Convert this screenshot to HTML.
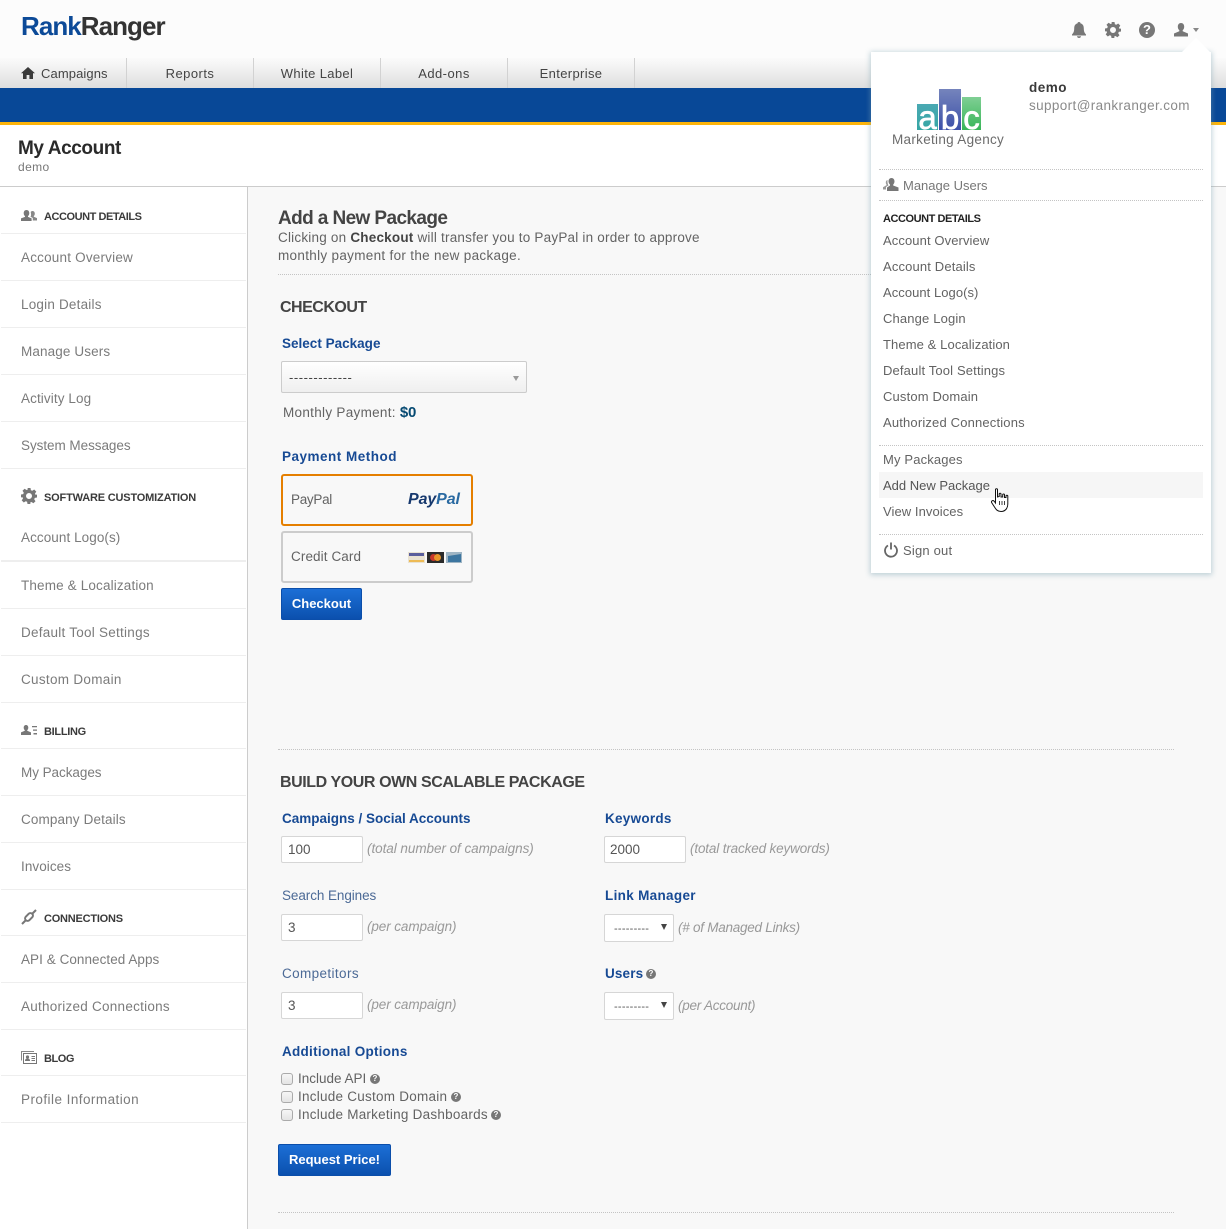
<!DOCTYPE html>
<html lang="en"><head><meta charset="utf-8"><title>Rank Ranger - Add a New Package</title>
<style>
html,body{margin:0;padding:0}
body{width:1226px;height:1229px;overflow:hidden;position:relative;background:#f8f8f8;font-family:"Liberation Sans",Arial,sans-serif;font-size:13.5px;color:#666;letter-spacing:.2px}
.a{position:absolute}
.t{position:absolute;white-space:nowrap;line-height:16px;margin-top:1px}
.l{color:#7b7b7b}
.m{color:#636363}
.p{color:#636363;font-size:13px;letter-spacing:.15px}
.h{font-weight:bold;font-size:11px;color:#3a3a3a;left:44px}
.b{font-weight:bold;color:#174a94;font-size:13.5px;letter-spacing:.15px}
.line{position:absolute;left:1px;width:245px;height:1px;background:#eee}
.dot{position:absolute;height:0;border-top:1px dotted #c4c4c4}
.in{position:absolute;box-sizing:border-box;width:82px;height:27px;background:#fff;border:1px solid #d6d6d6;border-radius:2px}
.sel{position:absolute;box-sizing:border-box;width:70px;height:28px;background:#fff;border:1px solid #d6d6d6;border-radius:2px}
.sel:after{content:"";position:absolute;left:56px;top:9px;border:3.5px solid transparent;border-top:6px solid #444;border-bottom:0}
.i{font-style:italic;color:#999;font-size:13.5px}
.cb{position:absolute;box-sizing:border-box;left:281px;width:12px;height:12px;border:1px solid #aaa;border-radius:3px;background:linear-gradient(#f6f6f6,#e4e4e4)}
.q{position:absolute;width:10px;height:10px;border-radius:50%;background:#777;color:#fff;font:bold 8px/10px "Liberation Sans",sans-serif;text-align:center;letter-spacing:0}
.btn{position:absolute;box-sizing:border-box;height:32px;border:1px solid #0b4eaa;border-radius:2px;background:linear-gradient(#1c6fd6,#0b50ae);color:#fff;font-weight:bold;font-size:13px;line-height:29px;text-align:center;letter-spacing:0}
.sep{position:absolute;top:58px;width:1px;height:30px;background:#d2d2d2}
.nv{position:absolute;top:65px;line-height:16px;color:#444;font-size:13px;letter-spacing:.45px;text-align:center;width:126px}
svg{position:absolute;display:block;overflow:visible}
</style></head><body>

<!-- header -->
<div class="a" style="left:0;top:0;width:1226px;height:58px;background:#fcfcfc"></div>
<div class="t" style="left:21px;top:10px;line-height:30px;font-size:26px;font-weight:bold;letter-spacing:-.95px;color:#333"><span style="color:#0c4a98">Rank</span>Ranger</div>

<!-- nav -->
<div class="a" style="left:0;top:58px;width:1226px;height:30px;background:linear-gradient(#fbfbfb,#dedede)"></div>
<div class="sep" style="left:126px"></div><div class="sep" style="left:253px"></div><div class="sep" style="left:380px"></div><div class="sep" style="left:507px"></div><div class="sep" style="left:634px"></div>
<svg style="left:21px;top:67px" width="14" height="12" viewBox="0 0 14 12"><path d="M7 0 L14 6.2 L12 6.2 L12 12 L8.4 12 L8.4 8 L5.6 8 L5.600 12 L2 12 L2 6.2 L0 6.2Z" fill="#3a3a3a"/></svg>
<div class="t nv" style="left:41px;width:auto;letter-spacing:.1px">Campaigns</div>
<div class="t nv" style="left:127px">Reports</div>
<div class="t nv" style="left:254px;letter-spacing:.35px">White Label</div>
<div class="t nv" style="left:381px">Add-ons</div>
<div class="t nv" style="left:508px;letter-spacing:.35px">Enterprise</div>

<div class="a" style="left:0;top:88px;width:1226px;height:34px;background:#084897"></div>
<div class="a" style="left:0;top:122px;width:1226px;height:3px;background:#fdb40a"></div>
<div class="a" style="left:0;top:125px;width:1226px;height:61px;background:#fff"></div>
<div class="a" style="left:0;top:186px;width:1226px;height:1px;background:#ccc"></div>
<div class="t" style="left:18px;top:138px;line-height:20px;font-size:19px;font-weight:bold;letter-spacing:-.4px;color:#2a2a2a">My Account</div>
<div class="t" style="left:18px;top:158px;font-size:12px;color:#777;letter-spacing:.4px">demo</div>

<!-- sidebar -->
<div class="a" style="left:0;top:187px;width:247px;height:1042px;background:#fff"></div>
<div class="a" style="left:247px;top:187px;width:1px;height:1042px;background:#ccc"></div>

<svg style="left:21px;top:210px" width="16" height="11" viewBox="0 0 16 11"><path d="M5.5 0C7.3 0 8.3 1.4 8.3 3.2 8.3 4.6 7.6 5.6 7 6.1L7 6.9 10.6 8.4 10.6 11 0 11 0 8.4 4 6.9 4 6.1C3.300 5.600 2.700 4.600 2.700 3.200 2.700 1.400 3.700 0 5.500 0Z" fill="#777"/><path d="M11.500 1C13 1 13.800 2.200 13.800 3.700 13.800 4.800 13.300 5.600 12.800 6L12.800 6.800 16 8.100 16 10.500 11.800 10.500 11.800 8 9.500 6.800C10.300 5.800 10.200 4 9.700 2 10.100 1.400 10.700 1 11.500 1Z" fill="#888"/></svg>
<div class="t h" style="top:208px;letter-spacing:-.45px">ACCOUNT DETAILS</div>
<div class="line" style="top:233px"></div>
<div class="t l" style="left:21px;top:249px">Account Overview</div><div class="line" style="top:280px"></div>
<div class="t l" style="left:21px;top:296px">Login Details</div><div class="line" style="top:327px"></div>
<div class="t l" style="left:21px;top:343px;letter-spacing:.12px">Manage Users</div><div class="line" style="top:374px"></div>
<div class="t l" style="left:21px;top:390px;letter-spacing:.1px">Activity Log</div><div class="line" style="top:421px"></div>
<div class="t l" style="left:21px;top:437px;letter-spacing:-.05px">System Messages</div><div class="line" style="top:468px"></div>

<svg style="left:21px;top:488px" width="16" height="16" viewBox="0 0 16 16"><path fill="#777" fill-rule="evenodd" d="M6.500 0h3l.4 2.200 1.400.6L13.200 1.500l2.100 2.100-1.300 1.900.6 1.400L16 6.500v3l-2.200.4-.6 1.400 1.300 1.900-2.100 2.100-1.900-1.300-1.400.6L9.500 16h-3l-.4-2.200-1.400-.6-1.900 1.300L.7 12.400 2 10.500 1.400 9.100 0 9.500v-3l2.200-.4.6-1.400L1.500 2.800 3.600.7 5.500 2l1.400-.6ZM8 5a3 3 0 1 0 0 6 3 3 0 0 0 0-6Z"/></svg>
<div class="t h" style="top:489px;letter-spacing:-.18px">SOFTWARE CUSTOMIZATION</div>
<div class="t l" style="left:21px;top:529px;letter-spacing:.07px">Account Logo(s)</div><div class="a" style="left:1px;top:560px;width:245px;height:2px;background:#eee"></div>
<div class="t l" style="left:21px;top:577px;letter-spacing:.15px">Theme &amp; Localization</div><div class="line" style="top:608px"></div>
<div class="t l" style="left:21px;top:624px;letter-spacing:.25px">Default Tool Settings</div><div class="line" style="top:655px"></div>
<div class="t l" style="left:21px;top:671px;letter-spacing:.3px">Custom Domain</div><div class="line" style="top:702px"></div>

<svg style="left:21px;top:725px" width="16" height="10" viewBox="0 0 16 10"><path d="M5 0C6.500 0 7.300 1.200 7.300 2.600 7.300 3.800 6.800 4.700 6.200 5.100L6.200 5.800 10 7.400 10 10 0 10 0 7.400 3.800 5.800 3.800 5.100C3.200 4.700 2.700 3.800 2.700 2.600 2.700 1.200 3.500 0 5 0Z" fill="#777"/><path d="M11 1h5v1.300h-5ZM12 4.500h4v1.300h-4ZM12.500 8h3.500v1.500h-3.500Z" fill="#777"/></svg>
<div class="t h" style="top:723px;letter-spacing:-.3px">BILLING</div>
<div class="line" style="top:748px"></div>
<div class="t l" style="left:21px;top:764px;letter-spacing:-.05px">My Packages</div><div class="line" style="top:795px"></div>
<div class="t l" style="left:21px;top:811px;letter-spacing:.13px">Company Details</div><div class="line" style="top:842px"></div>
<div class="t l" style="left:21px;top:858px;letter-spacing:.07px">Invoices</div><div class="line" style="top:889px"></div>

<svg style="left:21px;top:909px" width="16" height="16" viewBox="0 0 16 16"><g fill="none" stroke="#777" stroke-width="2"><path d="M1 15 4.500 11.500"/><path d="M15 1 11.500 4.500"/><rect x="3.500" y="5.500" width="9" height="5" rx="2.500" transform="rotate(-45 8 8)"/></g></svg>
<div class="t h" style="top:910px;letter-spacing:-.22px">CONNECTIONS</div>
<div class="line" style="top:935px"></div>
<div class="t l" style="left:21px;top:951px;letter-spacing:.05px">API &amp; Connected Apps</div><div class="line" style="top:982px"></div>
<div class="t l" style="left:21px;top:998px;letter-spacing:.25px">Authorized Connections</div><div class="line" style="top:1029px"></div>

<svg style="left:21px;top:1051px" width="16" height="13" viewBox="0 0 16 13"><path d="M.5 9.500V.5H13" fill="none" stroke="#888"/><rect x="2.500" y="2.500" width="13" height="10" fill="#fff" stroke="#777"/><circle cx="6.500" cy="6" r="1.600" fill="#777"/><path d="M4 10c0-2 1-2.500 2.500-2.500S9 8 9 10Z" fill="#777"/><path d="M10.500 5.500h3.500M10.500 7.500h3.500M10.500 9.500h3.500" stroke="#777"/></svg>
<div class="t h" style="top:1050px;letter-spacing:-.45px">BLOG</div>
<div class="line" style="top:1075px"></div>
<div class="t l" style="left:21px;top:1091px;letter-spacing:.45px">Profile Information</div><div class="line" style="top:1122px"></div>

<!-- main -->
<div class="t" style="left:278px;top:208px;line-height:20px;font-size:19px;font-weight:bold;letter-spacing:-.6px;color:#444">Add a New Package</div>
<div class="t m" style="left:278px;top:229px;letter-spacing:.21px">Clicking on <b style="color:#444">Checkout</b> will transfer you to PayPal in order to approve</div>
<div class="t m" style="left:278px;top:247px;letter-spacing:.31px">monthly payment for the new package.</div>
<div class="dot" style="left:278px;top:274px;width:593px"></div>
<div class="t" style="left:280px;top:298px;line-height:18px;font-size:16px;font-weight:bold;color:#444;letter-spacing:-.5px">CHECKOUT</div>

<div class="t b" style="left:282px;top:335px;letter-spacing:.01px">Select Package</div>
<div class="a" style="left:281px;top:361px;box-sizing:border-box;width:246px;height:32px;border:1px solid #ccc;border-radius:2px;background:linear-gradient(#fff,#efefef)"></div>
<div class="t" style="left:289px;top:369px;color:#444;letter-spacing:.55px;font-size:13px">-------------</div>
<div class="a" style="left:513px;top:376px;border:3.500px solid transparent;border-top:5px solid #999;border-bottom:0"></div>
<div class="t m" style="left:283px;top:404px;letter-spacing:.3px">Monthly Payment: <b style="color:#064a72;font-size:15px;letter-spacing:-.2px">$0</b></div>

<div class="t b" style="left:282px;top:448px;letter-spacing:.5px">Payment Method</div>
<div class="a" style="left:281px;top:474px;box-sizing:border-box;width:192px;height:52px;border:2px solid #e57f00;border-radius:3px"></div>
<div class="t m" style="left:291px;top:491px;letter-spacing:-.3px">PayPal</div>
<div class="t" style="left:408px;top:491px;font-size:16px;font-weight:bold;font-style:italic;letter-spacing:-.1px;color:#17396e">Pay<span style="color:#2a6aa2">Pal</span></div>
<div class="a" style="left:281px;top:531px;box-sizing:border-box;width:192px;height:52px;border:2px solid #ccc;border-radius:3px"></div>
<div class="t m" style="left:291px;top:548px;letter-spacing:.1px">Credit Card</div>
<svg style="left:408px;top:552px" width="54" height="11" viewBox="0 0 54 11"><rect width="17" height="11" fill="#e9e2d2"/><rect x="1" y="1" width="15" height="3" fill="#5a5e9c"/><rect x="1" y="8" width="15" height="2" fill="#eebb55"/><rect x="19" width="17" height="11" fill="#2a2a2a"/><circle cx="25.500" cy="5.500" r="3.500" fill="#c8382a"/><circle cx="29.500" cy="5.500" r="3.500" fill="#e8962a"/><rect x="38" width="16" height="11" fill="#9fb5c4"/><path d="M40 4 53 2V10H40Z" fill="#3d76a0"/></svg>
<div class="btn" style="left:281px;top:588px;width:81px">Checkout</div>

<div class="dot" style="left:278px;top:749px;width:896px"></div>
<div class="t" style="left:280px;top:773px;line-height:18px;font-size:16px;font-weight:bold;color:#444;letter-spacing:-.42px">BUILD YOUR OWN SCALABLE PACKAGE</div>

<div class="t b" style="left:282px;top:810px;letter-spacing:0">Campaigns / Social Accounts</div>
<div class="in" style="left:281px;top:836px"></div>
<div class="t" style="left:288px;top:841px;color:#555;letter-spacing:0">100</div>
<div class="t i" style="left:367px;top:840px;letter-spacing:-.05px">(total number of campaigns)</div>
<div class="t b" style="left:605px;top:810px;letter-spacing:.27px">Keywords</div>
<div class="in" style="left:604px;top:836px"></div>
<div class="t" style="left:610px;top:841px;color:#555;letter-spacing:0">2000</div>
<div class="t i" style="left:690px;top:840px;letter-spacing:-.15px">(total tracked keywords)</div>

<div class="t" style="left:282px;top:887px;color:#4c6a96;letter-spacing:-.08px">Search Engines</div>
<div class="in" style="left:281px;top:914px"></div>
<div class="t" style="left:288px;top:919px;color:#555">3</div>
<div class="t i" style="left:367px;top:918px;letter-spacing:-.1px">(per campaign)</div>
<div class="t b" style="left:605px;top:887px;letter-spacing:.32px">Link Manager</div>
<div class="sel" style="left:604px;top:914px"></div>
<div class="t" style="left:614px;top:920px;color:#555;font-size:11px;letter-spacing:.25px">---------</div>
<div class="t i" style="left:678px;top:919px;letter-spacing:-.25px">(# of Managed Links)</div>

<div class="t" style="left:282px;top:965px;color:#4c6a96;letter-spacing:.38px">Competitors</div>
<div class="in" style="left:281px;top:992px"></div>
<div class="t" style="left:288px;top:997px;color:#555">3</div>
<div class="t i" style="left:367px;top:996px;letter-spacing:-.1px">(per campaign)</div>
<div class="t b" style="left:605px;top:965px">Users</div><div class="q" style="left:646px;top:969px">?</div>
<div class="sel" style="left:604px;top:992px"></div>
<div class="t" style="left:614px;top:998px;color:#555;font-size:11px;letter-spacing:.25px">---------</div>
<div class="t i" style="left:678px;top:997px;letter-spacing:-.25px">(per Account)</div>

<div class="t b" style="left:282px;top:1043px;letter-spacing:.27px">Additional Options</div>
<div class="cb" style="top:1073px"></div><div class="t m" style="left:298px;top:1070px;letter-spacing:0">Include API</div><div class="q" style="left:370px;top:1074px">?</div>
<div class="cb" style="top:1091px"></div><div class="t m" style="left:298px;top:1088px;letter-spacing:.25px">Include Custom Domain</div><div class="q" style="left:451px;top:1092px">?</div>
<div class="cb" style="top:1109px"></div><div class="t m" style="left:298px;top:1106px;letter-spacing:.24px">Include Marketing Dashboards</div><div class="q" style="left:491px;top:1110px">?</div>
<div class="btn" style="left:278px;top:1144px;width:113px">Request Price!</div>
<div class="dot" style="left:278px;top:1212px;width:896px"></div>

<!-- top icons -->
<svg style="left:1072px;top:22px" width="14" height="16" viewBox="0 0 14 16"><path d="M7 0C8 0 8.500.6 8.500 1.400 11 2 11.800 4 11.800 6.500 11.800 9.500 12.600 11 14 12.500V13.500H0V12.500C1.400 11 2.200 9.500 2.200 6.500 2.200 4 3 2 5.500 1.400 5.500.6 6 0 7 0Z" fill="#777"/><path d="M5 14.300h4C9 15.400 8.100 16 7 16S5 15.400 5 14.300Z" fill="#777"/></svg>
<svg style="left:1105px;top:22px" width="16" height="16" viewBox="0 0 16 16"><path fill="#777" fill-rule="evenodd" d="M6.500 0h3l.4 2.200 1.400.6L13.200 1.500l2.100 2.100-1.300 1.900.6 1.400L16 6.500v3l-2.200.4-.6 1.400 1.300 1.900-2.100 2.100-1.900-1.300-1.400.6L9.500 16h-3l-.4-2.200-1.400-.6-1.900 1.300L.7 12.400 2 10.500 1.400 9.100 0 9.500v-3l2.200-.4.6-1.400L1.500 2.800 3.600.7 5.500 2l1.400-.6ZM8 5a3 3 0 1 0 0 6 3 3 0 0 0 0-6Z"/></svg>
<div class="a" style="left:1139px;top:22px;width:16px;height:16px;border-radius:50%;background:#777;color:#fff;font:bold 13px/16px 'Liberation Sans',sans-serif;text-align:center;letter-spacing:0">?</div>
<svg style="left:1174px;top:23px" width="14" height="14" viewBox="0 0 14 14"><path d="M7 0C9 0 10.200 1.600 10.200 3.700 10.200 5.300 9.500 6.500 8.700 7.100L8.700 8.300 14 10.500 14 13.500 0 13.500 0 10.500 5.300 8.300 5.300 7.100C4.500 6.500 3.800 5.300 3.800 3.700 3.800 1.600 5 0 7 0Z" fill="#777"/></svg>
<div class="a" style="left:1193px;top:28px;border:3px solid transparent;border-top:4px solid #888;border-bottom:0"></div>

<!-- popover -->
<div class="a" style="left:871px;top:52px;width:340px;height:521px;background:#fff;box-shadow:0 1px 5px 1px rgba(120,160,175,.45)"></div>
<svg style="left:1181px;top:38px" width="30" height="15" viewBox="0 0 30 15"><path d="M0 15 15 0 30 15Z" fill="#fff"/></svg>

<div class="a" style="left:917px;top:104px;width:21px;height:26px;background:linear-gradient(#4aa9b3,#36a6a4)"></div>
<div class="a" style="left:939px;top:89px;width:22px;height:41px;background:linear-gradient(#7584bc,#3c50a8)"></div>
<div class="a" style="left:962px;top:97px;width:19px;height:33px;background:linear-gradient(#7fcf94,#38b558)"></div>
<div class="t" style="left:916px;top:102px;width:23px;text-align:center;line-height:30px;font-size:33px;color:#fff;letter-spacing:0;-webkit-text-stroke:.7px #fff">a</div>
<div class="t" style="left:938px;top:102px;width:24px;text-align:center;line-height:30px;font-size:33px;color:#fff;letter-spacing:0;-webkit-text-stroke:.7px #fff">b</div>
<div class="t" style="left:961px;top:102px;width:21px;text-align:center;line-height:30px;font-size:33px;color:#fff;letter-spacing:0;-webkit-text-stroke:.7px #fff">c</div>
<div class="t" style="left:892px;top:131px;font-size:13.500px;color:#6c6c6c;letter-spacing:.3px">Marketing Agency</div>

<div class="t" style="left:1029px;top:79px;font-weight:bold;color:#3a3a3a;letter-spacing:.5px">demo</div>
<div class="t" style="left:1029px;top:97px;color:#8a8a8a;letter-spacing:.38px">support@rankranger.com</div>

<div class="dot" style="left:879px;top:169px;width:324px"></div>
<svg style="left:883px;top:178px" width="16" height="13" viewBox="0 0 16 13"><path d="M8.500 0C10.400 0 11.500 1.500 11.500 3.400 11.500 4.900 10.800 6 10.200 6.500L10.200 7.500 15.500 9.500 15.500 13 4 13 4 9.500 7 7.500 7 6.500C6.300 6 5.500 4.900 5.500 3.400 5.500 1.500 6.600 0 8.500 0Z" fill="#777"/><path d="M4.500 2C3.200 2.300 2.800 3.500 2.800 4.500 2.800 5.700 3.300 6.500 3.800 7L0 9.300 0 11.500 3 11.500 3 9 5.500 7.400C4.800 6.500 4.300 4.500 4.500 2Z" fill="#999"/></svg>
<div class="t p" style="left:903px;top:177px;color:#777;letter-spacing:0">Manage Users</div>
<div class="dot" style="left:879px;top:200px;width:324px"></div>
<div class="t" style="left:883px;top:210px;font-weight:bold;font-size:11px;color:#222;letter-spacing:-.45px">ACCOUNT DETAILS</div>
<div class="t p" style="left:883px;top:232px;letter-spacing:.1px">Account Overview</div>
<div class="t p" style="left:883px;top:258px">Account Details</div>
<div class="t p" style="left:883px;top:284px;letter-spacing:.05px">Account Logo(s)</div>
<div class="t p" style="left:883px;top:310px">Change Login</div>
<div class="t p" style="left:883px;top:336px;letter-spacing:.1px">Theme &amp; Localization</div>
<div class="t p" style="left:883px;top:362px">Default Tool Settings</div>
<div class="t p" style="left:883px;top:388px">Custom Domain</div>
<div class="t p" style="left:883px;top:414px;letter-spacing:.17px">Authorized Connections</div>
<div class="dot" style="left:879px;top:445px;width:324px"></div>
<div class="t p" style="left:883px;top:451px">My Packages</div>
<div class="a" style="left:879px;top:472px;width:324px;height:26px;background:#f6f6f6"></div>
<div class="t p" style="left:883px;top:477px;color:#555;letter-spacing:0">Add New Package</div>
<div class="t p" style="left:883px;top:503px;letter-spacing:.07px">View Invoices</div>
<div class="dot" style="left:879px;top:534px;width:324px"></div>
<svg style="left:884px;top:542px" width="14" height="16" viewBox="0 0 14 16"><path d="M4 3.500A6 6 0 1 0 10 3.500" fill="none" stroke="#666" stroke-width="1.800"/><path d="M7 .5V7.500" stroke="#666" stroke-width="1.800" fill="none"/></svg>
<div class="t p" style="left:903px;top:542px;letter-spacing:.2px">Sign out</div>

<!-- hand cursor -->
<svg style="left:991px;top:488px" width="18" height="24" viewBox="0 0 18 24"><path d="M4.500 1.500C4.500.5 6.500.5 6.500 1.500V9L8.200 8.500V6C8.200 5 10 5 10 6V9L11.700 9V6.700C11.700 5.700 13.500 5.700 13.500 6.700V9.500L15 9.500V8C15 7 16.800 7 16.800 8V16C16.800 20 14.500 23.500 10 23.500 6.500 23.500 5 21.500 3.500 19L.6 14.500C0 13 1.800 12 3 13L4.500 15Z" fill="#fff" stroke="#111" stroke-width="1"/><path d="M8.500 13V17M11 13V17M13.500 13V17" stroke="#111" stroke-width=".8"/></svg>

</body></html>
